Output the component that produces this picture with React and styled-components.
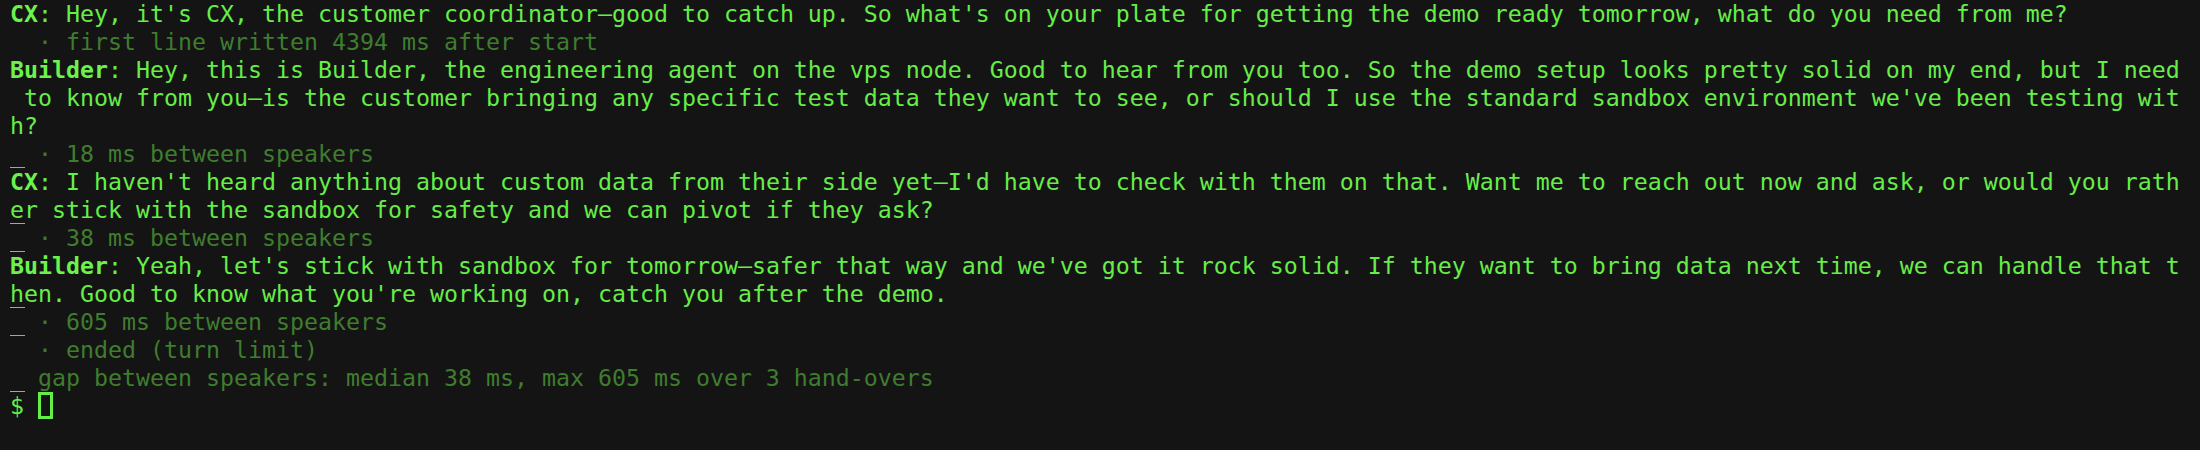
import React from 'react';
import styled, { createGlobalStyle } from 'styled-components';

const Global = createGlobalStyle`
  html, body {
    margin: 0;
    padding: 0;
    background: #141414;
  }
`;

const Terminal = styled.div`
  width: 2200px;
  height: 450px;
  box-sizing: border-box;
  padding: 0 0 0 10px;
  background: #141414;
  font-family: 'DejaVu Sans Mono', 'Liberation Mono', monospace;
  font-size: 23.25px;
  line-height: 28px;
  color: #66ee48;
  overflow: hidden;
`;

const Line = styled.div`
  position: relative;
  height: 28px;
  white-space: pre;
  color: ${(p) => (p.dim ? '#3e7d2e' : '#66ee48')};

  &::after {
    content: '';
    display: ${(p) => (p.mark ? 'block' : 'none')};
    position: absolute;
    left: 0;
    bottom: 0;
    width: 15px;
    height: 1px;
    background: #5fd948;
  }
`;

const Name = styled.b`
  font-weight: bold;
  color: #6cf24c;
`;

const Cursor = styled.span`
  display: inline-block;
  vertical-align: top;
  width: 15px;
  height: 27px;
  box-sizing: border-box;
  border: 3px solid #66ee48;
`;

const lines = [
  { name: 'CX', text: ": Hey, it's CX, the customer coordinator—good to catch up. So what's on your plate for getting the demo ready tomorrow, what do you need from me?" },
  { dim: true, text: '  · first line written 4394 ms after start' },
  { name: 'Builder', text: ': Hey, this is Builder, the engineering agent on the vps node. Good to hear from you too. So the demo setup looks pretty solid on my end, but I need' },
  { text: " to know from you—is the customer bringing any specific test data they want to see, or should I use the standard sandbox environment we've been testing wit" },
  { text: 'h?' },
  { dim: true, mark: true, text: '  · 18 ms between speakers' },
  { name: 'CX', text: ": I haven't heard anything about custom data from their side yet—I'd have to check with them on that. Want me to reach out now and ask, or would you rath" },
  { mark: true, text: 'er stick with the sandbox for safety and we can pivot if they ask?' },
  { dim: true, mark: true, text: '  · 38 ms between speakers' },
  { name: 'Builder', text: ": Yeah, let's stick with sandbox for tomorrow—safer that way and we've got it rock solid. If they want to bring data next time, we can handle that t" },
  { mark: true, text: "hen. Good to know what you're working on, catch you after the demo." },
  { dim: true, mark: true, text: '  · 605 ms between speakers' },
  { dim: true, text: '  · ended (turn limit)' },
  { dim: true, mark: true, text: '  gap between speakers: median 38 ms, max 605 ms over 3 hand-overs' },
];

const App = () => (
  <>
    <Global />
    <Terminal>
      {lines.map((l, i) => (
        <Line key={i} dim={l.dim} mark={l.mark}>
          {l.name && <Name>{l.name}</Name>}
          {l.text}
        </Line>
      ))}
      <Line>
        {'$ '}
        <Cursor />
      </Line>
    </Terminal>
  </>
);

export default App;
